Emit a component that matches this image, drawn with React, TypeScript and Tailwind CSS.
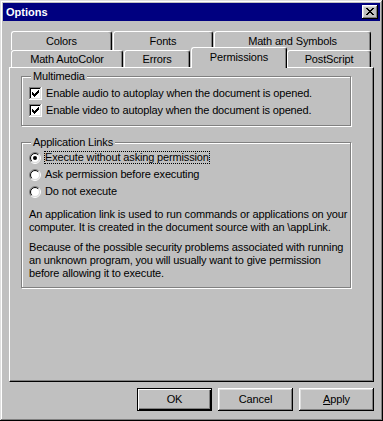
import React from "react";

const bevel =
  "shadow-[inset_-1px_-1px_#000,inset_1px_1px_#fff,inset_-2px_-2px_#808080,inset_2px_2px_#dfdfdf]";

function CloseGlyph() {
  const rows: [number, number, number][] = [
    [0, 0, 2], [6, 0, 2],
    [1, 1, 2], [5, 1, 2],
    [2, 2, 4],
    [3, 3, 2],
    [2, 4, 4],
    [1, 5, 2], [5, 5, 2],
    [0, 6, 2], [6, 6, 2],
  ];
  return (
    <svg width="8" height="7" viewBox="0 0 8 7" shapeRendering="crispEdges">
      {rows.map(([x, y, w], i) => (
        <rect key={i} x={x} y={y} width={w} height={1} fill="#000" />
      ))}
    </svg>
  );
}

function Checkbox({ checked }: { checked: boolean }) {
  const check: [number, number, number][] = [
    [9, 3, 1],
    [8, 4, 2],
    [3, 5, 1], [7, 5, 3],
    [3, 6, 2], [6, 6, 3],
    [3, 7, 5],
    [4, 8, 3],
    [5, 9, 1],
  ];
  return (
    <svg width="13" height="13" viewBox="0 0 13 13" shapeRendering="crispEdges" className="shrink-0">
      <rect x="0" y="0" width="13" height="13" fill="#fff" />
      <rect x="0" y="0" width="12" height="1" fill="#808080" />
      <rect x="0" y="0" width="1" height="12" fill="#808080" />
      <rect x="1" y="1" width="10" height="1" fill="#000" />
      <rect x="1" y="1" width="1" height="10" fill="#000" />
      <rect x="1" y="11" width="11" height="1" fill="#dfdfdf" />
      <rect x="11" y="1" width="1" height="11" fill="#dfdfdf" />
      {checked &&
        check.map(([x, y, w], i) => <rect key={i} x={x} y={y} width={w} height={1} fill="#000" />)}
    </svg>
  );
}

function Radio({ checked }: { checked: boolean }) {
  const arc = (r: number, from: "bl" | "tr") => {
    const d = r * 0.7071;
    const bl = `${6 - d} ${6 + d}`;
    const tr = `${6 + d} ${6 - d}`;
    return from === "bl" ? `M${bl} A${r} ${r} 0 0 1 ${tr}` : `M${tr} A${r} ${r} 0 0 1 ${bl}`;
  };
  return (
    <svg width="12" height="12" viewBox="0 0 12 12" className="shrink-0">
      <circle cx="6" cy="6" r="4.5" fill="#fff" />
      <path d={arc(5.5, "bl")} stroke="#808080" fill="none" />
      <path d={arc(5.5, "tr")} stroke="#fff" fill="none" />
      <path d={arc(4.5, "bl")} stroke="#000" fill="none" />
      <path d={arc(4.5, "tr")} stroke="#dfdfdf" fill="none" />
      {checked && <circle cx="6" cy="6" r="2" fill="#000" />}
    </svg>
  );
}

function Tab({ label, className, selected = false }: { label: string; className: string; selected?: boolean }) {
  return (
    <div
      className={`${className} flex items-center justify-center rounded-t-[3px] border-l border-t border-r border-l-white border-t-white border-r-black bg-[#c0c0c0] shadow-[inset_-1px_0_#808080] ${
        selected ? "relative z-10 -mt-[3px] h-[21px] pb-[2px]" : "h-full"
      }`}
    >
      {label}
    </div>
  );
}

function Group({ title, className, children }: { title: string; className?: string; children: React.ReactNode }) {
  return (
    <fieldset
      className={`w-[330px] border border-[#808080] shadow-[inset_1px_1px_#fff,1px_1px_#fff] ${className ?? ""}`}
    >
      <legend className="ml-[9px] bg-[#c0c0c0] px-[2px] leading-[13px]">{title}</legend>
      {children}
    </fieldset>
  );
}

function Button({ children, isDefault = false }: { children: React.ReactNode; isDefault?: boolean }) {
  return (
    <button
      className={`flex h-[23px] w-[75px] items-center justify-center bg-[#c0c0c0] ${
        isDefault
          ? "border border-black shadow-[inset_1px_1px_#fff,inset_-1px_-1px_#000,inset_-2px_-2px_#808080]"
          : bevel
      }`}
    >
      {children}
    </button>
  );
}

export default function App() {
  return (
    <div className="flex h-[421px] w-[383px] flex-col bg-[#c0c0c0] p-[3px] font-['Liberation_Sans',Arial,sans-serif] text-[11px] leading-[13px] tracking-[-0.15px] text-black shadow-[inset_-1px_-1px_#000,inset_1px_1px_#dfdfdf,inset_-2px_-2px_#808080,inset_2px_2px_#fff]">
      {/* Title bar */}
      <div className="flex h-[18px] shrink-0 items-center justify-between bg-[#000080] pl-[3px] pr-[2px]">
        <span className="font-bold tracking-normal text-white">Options</span>
        <div className={`flex h-[14px] w-[16px] items-center justify-center bg-[#c0c0c0] pb-[1px] ${bevel}`}>
          <CloseGlyph />
        </div>
      </div>

      <div className="flex flex-col px-[6px]">
        {/* Tab rows */}
        <div className="mt-[10px] flex h-[19px] pl-[2px]">
          <Tab label="Colors" className="w-[101px]" />
          <Tab label="Fonts" className="ml-[1px] w-[100px]" />
          <Tab label="Math and Symbols" className="ml-[1px] w-[157px]" />
        </div>
        <div className="flex h-[17px] items-start pl-[2px]">
          <Tab label="Math AutoColor" className="w-[112px]" />
          <Tab label="Errors" className="ml-[1px] w-[66px]" />
          <Tab label="Permissions" className="ml-[1px] w-[96px]" selected />
          <Tab label="PostScript" className="w-[84px]" />
        </div>

        {/* Panel */}
        <div className="h-[315px] w-[365px] border-b border-l border-r border-t border-b-black border-l-white border-r-black border-t-white px-[11px] shadow-[inset_-1px_-1px_#808080]">
          <Group title="Multimedia" className="mt-[2px]">
            <div className="flex flex-col pb-[6px] pl-[7px] pt-[2px]">
              <label className="flex h-[17px] items-center gap-[4px]">
                <Checkbox checked />
                <span>Enable audio to autoplay when the document is opened.</span>
              </label>
              <label className="flex h-[17px] items-center gap-[4px]">
                <Checkbox checked />
                <span>Enable video to autoplay when the document is opened.</span>
              </label>
            </div>
          </Group>

          <Group title="Application Links" className="mt-[10px]">
            <div className="flex flex-col pb-[7px] pl-[7px]">
              <label className="flex h-[17px] items-center gap-[3px]">
                <Radio checked />
                <span className="border border-dotted border-black leading-[11px]">
                  Execute without asking permission
                </span>
              </label>
              <label className="flex h-[17px] items-center gap-[3px]">
                <Radio checked={false} />
                <span className="border border-transparent leading-[11px]">Ask permission before executing</span>
              </label>
              <label className="flex h-[17px] items-center gap-[3px]">
                <Radio checked={false} />
                <span className="border border-transparent leading-[11px]">Do not execute</span>
              </label>
              <p className="mt-[8px] whitespace-nowrap">
                An application link is used to run commands or applications on your
                <br />
                computer. It is created in the document source with an \appLink.
              </p>
              <p className="mt-[7px] whitespace-nowrap">
                Because of the possible security problems associated with running
                <br />
                an unknown program, you will usually want to give permission
                <br />
                before allowing it to execute.
              </p>
            </div>
          </Group>
        </div>

        {/* Buttons */}
        <div className="mt-[6px] flex justify-end gap-[6px]">
          <Button isDefault>OK</Button>
          <Button>Cancel</Button>
          <Button>
            <span className="underline underline-offset-1">A</span>pply
          </Button>
        </div>
      </div>
    </div>
  );
}
